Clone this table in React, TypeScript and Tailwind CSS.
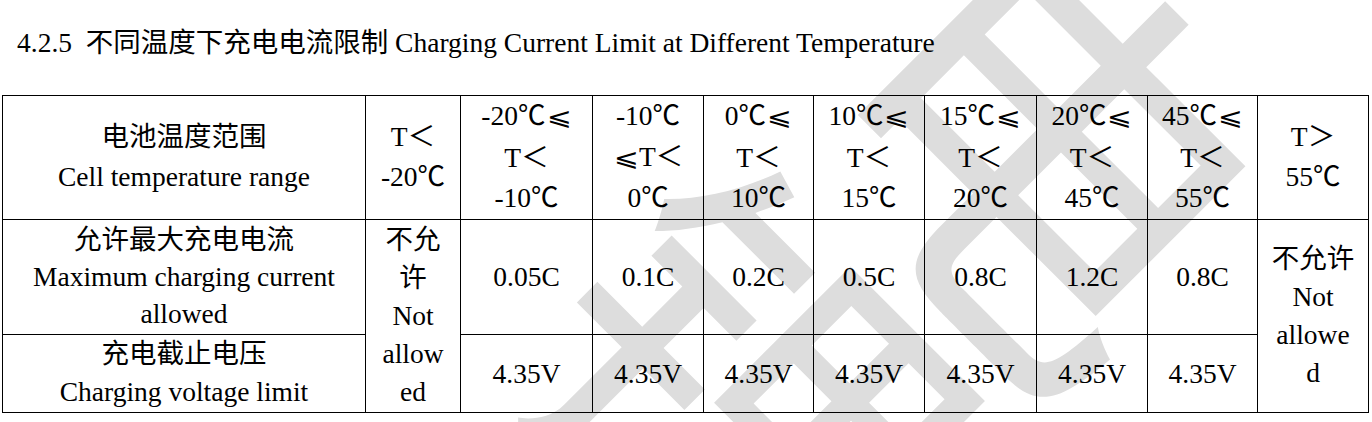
import React from "react";

const serif = "font-['Liberation_Serif','Noto_Sans_CJK_SC','DejaVu_Sans',serif]";

// "⩽" comes from DejaVu, widened a bit to match the full-width glyph
function Le() {
  return <span className="mx-[3px] inline-block scale-x-125 font-['DejaVu_Sans',sans-serif] text-[24px]">⩽</span>;
}

const header: React.ReactNode[][] = [
  ["电池温度范围", "Cell temperature range"],
  ["T＜", "-20℃"],
  [<>-20℃<Le /></>, "T＜", "-10℃"],
  ["-10℃", <><Le />T＜</>, "0℃"],
  [<>0℃<Le /></>, "T＜", "10℃"],
  [<>10℃<Le /></>, "T＜", "15℃"],
  [<>15℃<Le /></>, "T＜", "20℃"],
  [<>20℃<Le /></>, "T＜", "45℃"],
  [<>45℃<Le /></>, "T＜", "55℃"],
  ["T＞", "55℃"],
];

const currents = ["0.05C", "0.1C", "0.2C", "0.5C", "0.8C", "1.2C", "0.8C"];
const colWidths = [363, 95, 132, 111, 110, 111, 112, 111, 110, 111];

function Lines({ lines }: { lines: React.ReactNode[] }) {
  return (
    <>
      {lines.map((l, i) => (
        <div key={i} className="whitespace-nowrap">
          {l}
        </div>
      ))}
    </>
  );
}

function Watermark() {
  return (
    <div className="pointer-events-none absolute inset-0 overflow-hidden font-['Noto_Sans_CJK_SC',sans-serif] font-normal leading-none text-[#dddddd]">
      <div className="absolute left-[850px] top-[-75px] rotate-45 text-[420px]">电</div>
      <div className="absolute left-[545px] top-[175px] rotate-45 text-[420px]">锂</div>
    </div>
  );
}

export default function App() {
  const cell = "border border-black text-center align-middle p-0";

  return (
    <div className={`relative h-[422px] w-[1372px] overflow-hidden bg-white text-black ${serif}`}>
      <Watermark />
      <div className="relative z-10">
        <div className="whitespace-pre pl-[17px] pt-[23px] text-[27.5px] leading-[40px]">
          4.2.5  不同温度下充电电流限制 Charging Current Limit at Different Temperature
        </div>

        <table className="ml-[2px] mt-[32px] table-fixed border-collapse text-[27.5px]" style={{ width: 1367 }}>
          <colgroup>
            {colWidths.map((w, i) => (
              <col key={i} style={{ width: w }} />
            ))}
          </colgroup>
          <tbody>
            <tr className="h-[123px] leading-[40.5px]">
              {header.map((lines, i) => (
                <td key={i} className={cell}>
                  <Lines lines={lines} />
                </td>
              ))}
            </tr>
            <tr className="h-[115px] leading-[37px]">
              <td className={cell}>
                <Lines lines={["允许最大充电电流", "Maximum charging current", "allowed"]} />
              </td>
              <td rowSpan={2} className={`${cell} leading-[38px]`}>
                <Lines lines={["不允", "许", "Not", "allow", "ed"]} />
              </td>
              {currents.map((c, i) => (
                <td key={i} className={cell}>
                  {c}
                </td>
              ))}
              <td rowSpan={2} className={`${cell} leading-[38px]`}>
                <Lines lines={["不允许", "Not", "allowe", "d"]} />
              </td>
            </tr>
            <tr className="h-[78px] leading-[38px]">
              <td className={cell}>
                <Lines lines={["充电截止电压", "Charging voltage limit"]} />
              </td>
              {currents.map((_, i) => (
                <td key={i} className={`${cell} pt-[1px]`}>
                  4.35V
                </td>
              ))}
            </tr>
          </tbody>
        </table>
      </div>
    </div>
  );
}
